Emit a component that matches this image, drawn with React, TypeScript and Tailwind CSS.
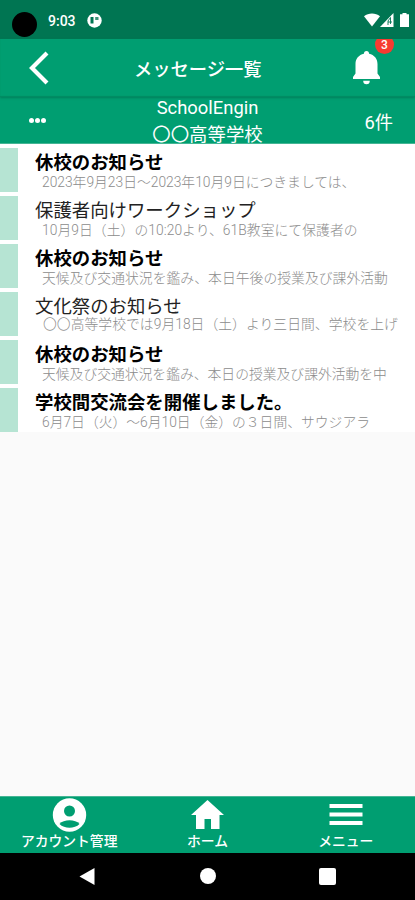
import React from 'react';

type Message = { title: string; body: string; unread: boolean; bodyClass?: string };

const messages: Message[] = [
  { title: '休校のお知らせ', body: '2023年9月23日〜2023年10月9日につきましては、', unread: true },
  { title: '保護者向けワークショップ', body: '10月9日（土）の10:20より、61B教室にて保護者の', unread: false, bodyClass: 'tracking-[0.06px]' },
  { title: '休校のお知らせ', body: '天候及び交通状況を鑑み、本日午後の授業及び課外活動', unread: true, bodyClass: 'tracking-[0.04px]' },
  { title: '文化祭のお知らせ', body: '〇〇高等学校では9月18日（土）より三日間、学校を上げ', unread: false, bodyClass: '-mt-[2px] pl-px tracking-[0.04px]' },
  { title: '休校のお知らせ', body: '天候及び交通状況を鑑み、本日の授業及び課外活動を中', unread: true },
  { title: '学校間交流会を開催しました。', body: '6月7日（火）〜6月10日（金）の３日間、サウジアラ', unread: true },
];

function StatusBar() {
  return (
    <div className="flex h-[39px] items-start bg-[#007552] text-white">
      <div className="ml-[12px] mt-[12px] size-[25px] rounded-full bg-black" />
      <span className="ml-[11px] mt-[12px] w-[28px] whitespace-nowrap text-[14px] font-medium leading-[18px]">9:03</span>
      <svg className="ml-[11px] mt-[13px]" width="15" height="15" viewBox="0 0 15 15">
        <circle cx="7.5" cy="7.5" r="7.2" fill="#fff" />
        <path d="M3.500 4h3v6.500h-3z" fill="#007552" />
        <path d="M8.200 4h3.300v3H8.200z" fill="#3c9479" />
      </svg>
      <div className="ml-auto mr-[6px] mt-[13px] flex">
        <svg width="16" height="14" viewBox="0 0 16 14">
          <path d="M0 3.200C4.500-.5 11.500-.5 16 3.200L8 13.500z" fill="#fff" />
        </svg>
        <svg width="14" height="14" viewBox="0 0 14 14">
          <path d="M13.500 0v14H0z" fill="#fff" />
          <path d="M8 12V8l2.500-3.500V11M8 9h4" stroke="#007552" strokeWidth="0.900" fill="none" />
        </svg>
        <svg className="ml-[6px]" width="9" height="14" viewBox="0 0 9 14">
          <path d="M2.500 0h4v1.300H9V14H0V1.300h2.500z" fill="#fff" />
        </svg>
      </div>
    </div>
  );
}

function TitleBar() {
  return (
    <header className="relative z-10 flex h-[58px] items-center bg-[#009e71] text-white shadow-[inset_0_-1px_1px_#008a62,0_1px_2px_#007f5b]">
      <svg className="ml-[29px] -mt-px" width="20" height="34" viewBox="0 0 20 34">
        <path d="M18 2L3 17l15 15" stroke="#fff" strokeWidth="4.200" fill="none" />
      </svg>
      <h1 className="ml-[85px] mt-[4px] whitespace-nowrap text-[18.3px] font-medium leading-[26px]">メッセージ一覧</h1>
      <div className="absolute left-[350px] top-0 h-[58px] w-[50px] overflow-hidden">
        <svg className="absolute left-[2px] top-[12px]" width="29" height="34" viewBox="0 0 29 34">
          <path d="M14.500 0c1.700 0 2.600 1.200 2.600 2.800 5.200 1.200 8.400 5 8.400 10.200v9.500L28 26V28H1v-2L3.500 22.500v-9.500c0-5.200 3.200-9 8.400-10.200C11.900 1.200 12.800 0 14.500 0zM11.200 29.800h6.600a3.300 3.500 0 0 1-6.600 0z" fill="#fff" />
        </svg>
        <span className="absolute left-[25px] top-[-4px] flex size-[19px] items-center justify-center rounded-full bg-[#f63b31] text-[12px] font-medium leading-none">3</span>
      </div>
    </header>
  );
}

function SchoolBar() {
  return (
    <section className="flex h-[47px] items-start border-b border-[#45b594] bg-[#009e71] text-white">
      <div className="ml-[29px] mt-[21px] flex w-[100px] gap-px">
        <i className="size-[5px] rounded-full bg-white" />
        <i className="size-[5px] rounded-full bg-white" />
        <i className="size-[5px] rounded-full bg-white" />
      </div>
      <div className="w-[157px] whitespace-nowrap text-center text-[18.4px]">
        <p className="-mt-[3px] h-[27px] leading-[27px]">SchoolEngin</p>
        <p className="h-[22px] leading-[28px]">〇〇高等学校</p>
      </div>
      <p className="ml-auto mr-[22px] mt-[13px] text-[18.3px] leading-[26px]">6件</p>
    </section>
  );
}

function MessageRow({ message }: { message: Message }) {
  return (
    <li className="flex h-[48px] pt-[4px]">
      <div className="h-[44px] w-[18px] shrink-0 bg-[#b6e4d3]" />
      <div className="ml-[17px] whitespace-nowrap">
        <p className={`h-[24px] text-[18.4px] leading-[29px] ${message.unread ? 'font-bold text-black' : 'font-normal text-[#222]'}`}>
          {message.title}
        </p>
        <p className={`ml-[7px] text-[13.8px] font-light leading-[20px] text-[#8c8c8c] ${message.bodyClass ?? ''}`}>{message.body}</p>
      </div>
    </li>
  );
}

function BottomTabs() {
  return (
    <nav className="grid h-[57px] grid-cols-3 border-t border-[#45b594] bg-[#009e71] text-center text-[13.8px] font-medium leading-[20px] text-white">
      <div className="flex flex-col items-center whitespace-nowrap">
        <svg className="mt-px" width="36" height="36" viewBox="0 0 36 36">
          <circle cx="18.500" cy="17" r="16.700" fill="#fff" />
          <circle cx="18.500" cy="13" r="5.500" fill="#009e71" />
          <path d="M8.500 26c4-5 16-5 20 0-5 5-15 5-20 0z" fill="#009e71" />
        </svg>
        <span className="-mt-[3px]">アカウント管理</span>
      </div>
      <div className="flex flex-col items-center">
        <svg className="mt-px" width="36" height="36" viewBox="0 0 36 36">
          <path d="M18.500 2L35 17h-4.500V31H22V21h-6.500v10H7V17H2z" fill="#fff" />
        </svg>
        <span className="-mt-[3px]">ホーム</span>
      </div>
      <div className="flex flex-col items-center">
        <svg className="mt-px" width="36" height="36" viewBox="0 0 36 36">
          <path d="M1.500 6h33v4h-33zM1.500 14.500h33v4h-33zM1.500 23h33v4h-33z" fill="#fff" />
        </svg>
        <span className="-mt-[3px]">メニュー</span>
      </div>
    </nav>
  );
}

function SystemNav() {
  return (
    <div className="flex h-[47px] bg-black pt-[15px]">
      <svg className="ml-[79px]" width="16" height="18" viewBox="0 0 16 18">
        <path d="M15.500 0v17L.5 8.500z" fill="#fff" />
      </svg>
      <div className="ml-[105px] size-[16px] rounded-full bg-white" />
      <div className="ml-[103px] size-[17px] rounded-[2px] bg-white" />
    </div>
  );
}

export default function App() {
  return (
    <div className="flex h-[900px] w-[415px] flex-col overflow-hidden bg-[#fafafa] font-[Roboto,'Noto_Sans_CJK_JP',sans-serif]">
      <StatusBar />
      <TitleBar />
      <SchoolBar />
      <ul className="bg-white">
        {messages.map((message, i) => (
          <MessageRow key={i} message={message} />
        ))}
      </ul>
      <main className="flex-1" />
      <BottomTabs />
      <SystemNav />
    </div>
  );
}
